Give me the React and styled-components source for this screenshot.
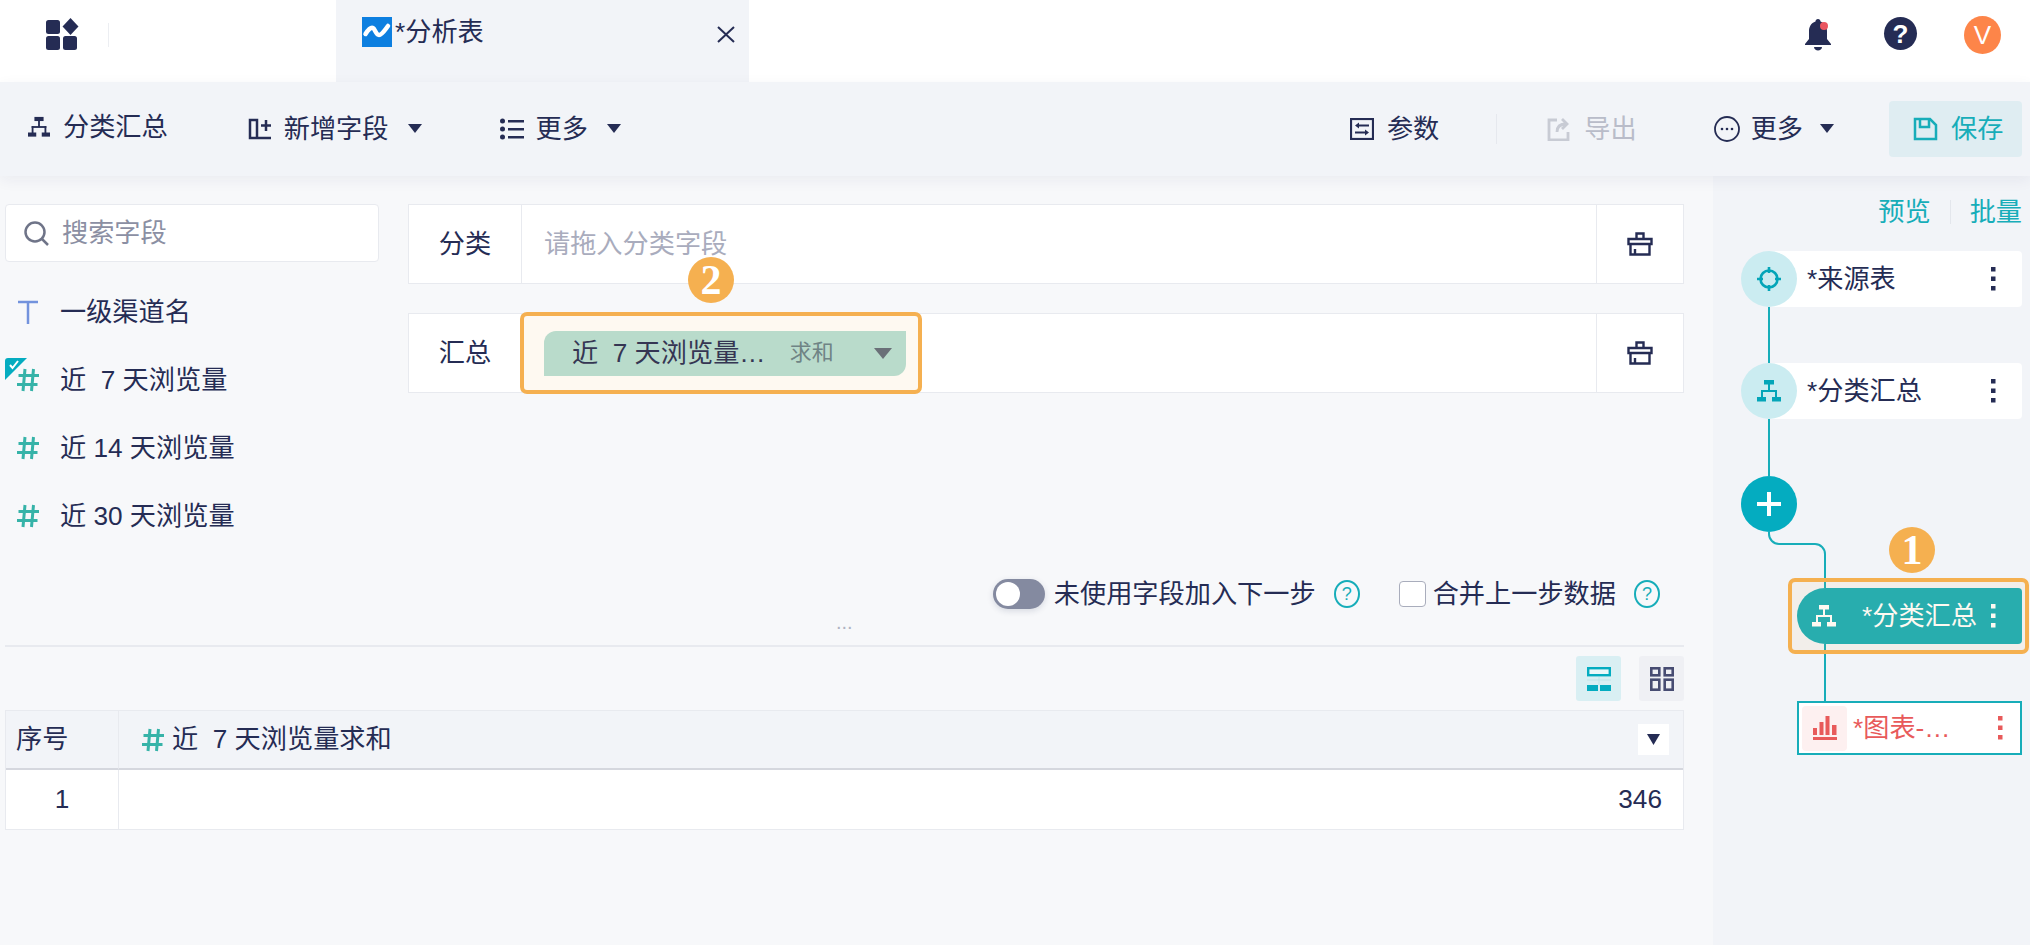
import React from "react";
import styled, { createGlobalStyle } from "styled-components";

const INK = "#252c54";
const TEAL = "#17adb9";
const ORANGE = "#f5b050";
const LINE = "#e8eaef";

const GlobalStyle = createGlobalStyle`
    html, body {
        margin: 0;
        padding: 0;
        background: #f7f8fa;
    }
    * {
        box-sizing: border-box;
    }
    body {
        font-family: "Liberation Sans", "Noto Sans CJK SC", sans-serif;
        font-size: 26.2px;
        line-height: 1;
        color: ${INK};
    }
`;

const Page = styled.div`
    width: 2030px;
    height: 945px;
    overflow: hidden;
    display: flex;
    flex-direction: column;
`;

/* top tab bar */
const TopBar = styled.div`
    height: 82px;
    flex: none;
    background: white;
    display: flex;
`;

const Brand = styled.div`
    width: 336px;
    display: flex;
    align-items: flex-start;
    padding: 18px 0 0 46px;
`;

const BrandDivider = styled.div`
    width: 1px;
    height: 24px;
    margin: 5px 0 0 29px;
    background: #eceef2;
`;

const Tab = styled.div`
    width: 413px;
    background: #f2f4f8;
    display: flex;
    align-items: flex-start;
    padding: 17px 14px 0 26px;
    line-height: 30px;
`;

const TabTitle = styled.span`
    margin-left: 3px;
    flex: 1;
`;

const TabClose = styled.span`
    margin-top: 9px;
    display: flex;
`;

const TopRight = styled.div`
    margin-left: auto;
    padding: 16px 29px 0 0;
    display: flex;
    align-items: flex-start;
`;

const BellWrap = styled.span`
    display: flex;
    margin: 2px 0 0 0;
`;

const HelpDark = styled.span`
    width: 33px;
    height: 33px;
    margin: 1px 0 0 52px;
    border-radius: 50%;
    background: ${INK};
    color: white;
    font-size: 26px;
    font-weight: 700;
    display: flex;
    align-items: center;
    justify-content: center;
`;

const Avatar = styled.span`
    width: 37px;
    height: 38px;
    margin-left: 47px;
    border-radius: 50%;
    background: #fd8549;
    color: white;
    font-size: 26px;
    display: flex;
    align-items: center;
    justify-content: center;
`;

/* toolbar */
const Toolbar = styled.div`
    height: 94px;
    flex: none;
    background: #f2f4f8;
    box-shadow: 0 4px 14px rgba(30, 40, 80, .06);
    position: relative;
    z-index: 2;
    display: flex;
    align-items: center;
    justify-content: space-between;
    padding: 0 8px 0 28px;
`;

const ToolGroup = styled.div`
    display: flex;
    align-items: center;
`;

const ToolItem = styled.div`
    display: flex;
    align-items: center;
    margin-left: ${p => p.$ml || 0}px;
    margin-top: ${p => p.$mt || 0}px;
    color: ${p => p.$disabled ? "#b9bcc9" : INK};
    white-space: nowrap;
`;

const ToolLabel = styled.span`
    margin-left: ${p => p.$ml || 13}px;
`;

const Caret = styled.span`
    width: 0;
    height: 0;
    margin-left: ${p => p.$ml || 17}px;
    border-left: ${p => p.$size || 7}px solid transparent;
    border-right: ${p => p.$size || 7}px solid transparent;
    border-top: ${p => (p.$size || 7) + 2}px solid ${p => p.$color || INK};
`;

const ToolDivider = styled.div`
    width: 1px;
    height: 30px;
    margin-left: 57px;
    background: #e6e8ee;
`;

const SaveButton = styled.div`
    width: 133px;
    height: 56px;
    margin-left: 55px;
    padding-left: 24px;
    border-radius: 4px;
    background: #dfedf2;
    color: ${TEAL};
    display: flex;
    align-items: center;
`;

/* body */
const Body = styled.div`
    flex: 1;
    display: flex;
    min-height: 0;
`;

const Main = styled.div`
    width: 1713px;
    background: #f7f8fa;
    display: flex;
    flex-direction: column;
`;

const Designer = styled.div`
    height: 469px;
    flex: none;
    display: grid;
    grid-template-columns: 408px 1276px;
    padding-top: 28px;
`;

const FieldColumn = styled.div`
    padding: 0 29px 0 5px;
`;

const SearchBox = styled.div`
    height: 58px;
    border: 1px solid ${LINE};
    border-radius: 4px;
    background: white;
    color: #8b8fa3;
    display: flex;
    align-items: center;
    padding-left: 18px;
`;

const SearchText = styled.span`
    margin-left: 13px;
`;

const FieldList = styled.div`
    margin-top: 16px;
`;

const FieldRow = styled.div`
    height: 68px;
    position: relative;
    display: flex;
    align-items: center;
    padding-left: 12px;
    white-space: pre;
`;

const FieldIcon = styled.span`
    width: 22px;
    margin-right: 21px;
    display: flex;
    justify-content: center;
`;

const CheckMark = styled.span`
    position: absolute;
    left: 0;
    top: 12px;
    display: flex;
`;

const ConfigColumn = styled.div`
    display: flex;
    flex-direction: column;
`;

const ConfigRow = styled.div`
    height: 80px;
    margin-top: ${p => p.$mt || 0}px;
    background: white;
    border: 1px solid ${LINE};
    display: grid;
    grid-template-columns: 113px 1fr 87px;
`;

const ConfigLabel = styled.div`
    display: flex;
    align-items: center;
    justify-content: center;
    border-right: 1px solid ${LINE};
`;

const DropSlot = styled.div`
    position: relative;
    display: flex;
    align-items: center;
    padding-left: 22px;
    color: #a9acbd;
`;

const BrushCell = styled.div`
    display: flex;
    align-items: center;
    justify-content: center;
    border-left: 1px solid ${LINE};
`;

const FieldPill = styled.div`
    width: 362px;
    height: 45px;
    padding: 0 14px 0 28px;
    background: #b5dfd6;
    border-radius: 12px 0 12px 0;
    color: ${INK};
    display: flex;
    align-items: center;
    white-space: pre;
`;

const PillName = styled.span`
    width: 230px;
`;

const PillAgg = styled.span`
    width: 71px;
    font-size: 22px;
    color: #64808a;
`;

const Highlight = styled.div`
    position: absolute;
    border: 4px solid ${ORANGE};
    border-radius: 7px;
    background: rgba(245, 176, 80, .08);
    pointer-events: none;
    top: ${p => p.$top}px;
    left: ${p => p.$left}px;
    right: ${p => p.$right}px;
    bottom: ${p => p.$bottom}px;
`;

const StepBadge = styled.div`
    position: absolute;
    top: ${p => p.$top}px;
    left: ${p => p.$left}px;
    width: 46px;
    height: 46px;
    border-radius: 50%;
    background: ${ORANGE};
    color: white;
    font-family: "Liberation Serif", serif;
    font-size: 42px;
    font-weight: 700;
    line-height: 46px;
    text-align: center;
    z-index: 3;
`;

const OptionRow = styled.div`
    margin-top: 186px;
    padding-right: 24px;
    display: flex;
    justify-content: flex-end;
    align-items: center;
`;

const Toggle = styled.span`
    width: 52px;
    height: 30px;
    padding: 3px;
    border-radius: 15px;
    background: #848aa0;
    box-shadow: 0 2px 6px rgba(30, 40, 80, .15);
    display: flex;
`;

const ToggleKnob = styled.span`
    width: 24px;
    height: 24px;
    border-radius: 50%;
    background: white;
`;

const OptionText = styled.span`
    margin-left: ${p => p.$ml}px;
`;

const HelpLight = styled.span`
    width: 26px;
    height: 28px;
    margin-left: 18px;
    border: 2px solid ${TEAL};
    border-radius: 50%;
    color: ${TEAL};
    font-size: 18px;
    display: flex;
    align-items: center;
    justify-content: center;
`;

const CheckBox = styled.span`
    width: 27px;
    height: 26px;
    margin-left: 39px;
    border: 1px solid #a9adbc;
    border-radius: 4px;
    background: white;
`;

const Splitter = styled.div`
    height: 2px;
    flex: none;
    width: 1679px;
    margin-left: 5px;
    position: relative;
    background: ${LINE};
`;

const SplitterHandle = styled.span`
    position: absolute;
    left: 831px;
    top: -33px;
    font-size: 20px;
    color: #b0b3c2;
`;

const Preview = styled.div`
    width: 1679px;
    margin-left: 5px;
`;

const ViewButtons = styled.div`
    margin-top: 9px;
    display: flex;
    justify-content: flex-end;
    gap: 18px;
`;

const ViewButton = styled.div`
    width: 45px;
    height: 45px;
    border-radius: 3px;
    background: ${p => p.$active ? "#d9eff3" : "#eff0f4"};
    display: flex;
    align-items: center;
    justify-content: center;
`;

const Table = styled.div`
    margin-top: 9px;
    border: 1px solid ${LINE};
    display: grid;
    grid-template-columns: 113px 1fr;
    grid-template-rows: 59px 59px;
    background: white;
`;

const HeadCell = styled.div`
    background: #f2f4f8;
    border-bottom: 2px solid #d5d7de;
    border-right: ${p => p.$first ? `1px solid ${LINE}` : "0"};
    display: flex;
    align-items: center;
    padding-left: ${p => p.$pl}px;
    padding-right: 14px;
    white-space: pre;
`;

const HeadIcon = styled.span`
    display: flex;
    margin-right: 8px;
`;

const HeadText = styled.span`
    flex: 1;
`;

const SortBox = styled.span`
    width: 31px;
    height: 31px;
    background: white;
    display: flex;
    align-items: center;
    justify-content: center;
`;

const BodyCell = styled.div`
    display: flex;
    align-items: center;
    justify-content: ${p => p.$right ? "flex-end" : "center"};
    padding-right: ${p => p.$right ? 21 : 0}px;
    border-right: ${p => p.$right ? "0" : `1px solid ${LINE}`};
`;

/* flow sidebar */
const Sidebar = styled.div`
    width: 317px;
    background: #f2f4f8;
    padding-top: 20px;
`;

const SideLinks = styled.div`
    height: 32px;
    padding-right: 8px;
    color: ${TEAL};
    display: flex;
    justify-content: flex-end;
    align-items: center;
`;

const SideSep = styled.span`
    width: 1px;
    height: 24px;
    margin: 0 19px;
    background: #e3e6ec;
`;

const Flow = styled.div`
    margin-top: 23px;
    padding-left: 28px;
    display: flex;
    flex-direction: column;
`;

const FlowNode = styled.div`
    width: 281px;
    height: 56px;
    background: linear-gradient(to right, transparent 28px, white 28px);
    border-radius: 0 4px 4px 0;
    display: flex;
    align-items: center;
`;

const NodeCircle = styled.span`
    width: 56px;
    height: 56px;
    flex: none;
    border-radius: 50%;
    background: #cbecf1;
    display: flex;
    align-items: center;
    justify-content: center;
`;

const NodeTitle = styled.span`
    flex: 1;
    margin-left: 10px;
`;

const NodeDots = styled.span`
    width: ${p => p.$w || 31}px;
    flex: none;
    display: flex;
`;

const Connector = styled.div`
    width: 2px;
    height: ${p => p.$h}px;
    margin-left: ${p => p.$ml || 27}px;
    background: ${TEAL};
`;

const PlusCircle = styled.div`
    width: 56px;
    height: 56px;
    border-radius: 50%;
    background: #04acc0;
    display: flex;
    align-items: center;
    justify-content: center;
`;

const CurveLink = styled.svg`
    display: block;
    margin-left: 27px;
`;

const ActiveNode = styled.div`
    width: 225px;
    height: 56px;
    margin-left: 56px;
    position: relative;
    background: #17adb7;
    border-radius: 28px 4px 4px 28px;
    color: white;
    display: flex;
    align-items: center;
    padding-left: 15px;
`;

const ActiveTitle = styled.span`
    flex: 1;
    margin-left: 26px;
    white-space: nowrap;
`;

const ChartNode = styled.div`
    width: 225px;
    height: 54px;
    margin-left: 56px;
    background: white;
    border: 2px solid ${TEAL};
    color: #e85a5a;
    display: flex;
    align-items: center;
    padding-left: 3px;
`;

const ChartIcon = styled.span`
    width: 45px;
    height: 45px;
    border-radius: 4px;
    background: #fdf0f0;
    display: flex;
    align-items: center;
    justify-content: center;
`;

const ChartTitle = styled.span`
    flex: 1;
    margin-left: 6px;
    white-space: nowrap;
`;

const AppsIcon = () => (
    <svg width="33" height="32" viewBox="0 0 33 32" fill={INK}>
        <rect x="0" y="2" width="14" height="14" rx="2.5"/>
        <path d="M24.5 0l8 8.5-8 8.5-8-8.5z"/>
        <rect x="0" y="18" width="14" height="14" rx="2.5"/>
        <rect x="17" y="18" width="14" height="14" rx="2.5"/>
    </svg>
);

const TabIcon = () => (
    <svg width="30" height="30" viewBox="0 0 30 30">
        <rect width="30" height="30" fill="#0d7fe0"/>
        <path d="M3.500 17C6 13 9 10 11 11c2 1 3 7 6 7s6-5 9-9" fill="none" stroke="white" strokeWidth="4.500" strokeLinecap="round" strokeLinejoin="round"/>
    </svg>
);

const CloseIcon = () => (
    <svg width="18" height="17" viewBox="0 0 18 17" stroke={INK} strokeWidth="2">
        <path d="M1 1l16 15M17 1L1 16"/>
    </svg>
);

const BellIcon = () => (
    <svg width="28" height="33" viewBox="0 0 28 33" fill={INK}>
        <path d="M14 1c1.500 0 2.500 1 2.500 2.500C21 5 23 9 23 13v8l4 5v1H1v-1l4-5v-8c0-4 2-8 6.500-9.500C11.500 2 12.500 1 14 1z"/>
        <path d="M10 29h8c0 2-2 3.500-4 3.500S10 31 10 29z"/>
        <circle cx="20" cy="8" r="4" fill="#ea5560"/>
    </svg>
);

const HierarchyIcon = ({color = INK, size = 24}) => (
    <svg width={size} height={size} viewBox="0 0 24 24" fill={color}>
        <rect x="7" y="1" width="10" height="4.500"/>
        <rect x="11" y="5" width="2" height="7"/>
        <rect x="4" y="11" width="16" height="2"/>
        <rect x="4" y="11" width="2" height="8"/>
        <rect x="18" y="11" width="2" height="8"/>
        <rect x="0" y="18" width="9" height="4.500"/>
        <rect x="15" y="18" width="9" height="4.500"/>
    </svg>
);

const AddFieldIcon = () => (
    <svg width="24" height="22" viewBox="0 0 24 22" fill="none" stroke={INK} strokeWidth="2.500">
        <path d="M2 2h7v18H2zM9 20h14M18 2v11M13 7.500h10"/>
    </svg>
);

const ListIcon = () => (
    <svg width="24" height="22" viewBox="0 0 24 22" fill={INK}>
        <circle cx="2.500" cy="3" r="2.500"/>
        <circle cx="2.500" cy="11" r="2.500"/>
        <circle cx="2.500" cy="19" r="2.500"/>
        <rect x="8" y="2" width="16" height="2.500"/>
        <rect x="8" y="10" width="16" height="2.500"/>
        <rect x="8" y="18" width="16" height="2.500"/>
    </svg>
);

const ParamsIcon = () => (
    <svg width="24" height="22" viewBox="0 0 24 22" fill="none" stroke={INK} strokeWidth="2.200">
        <rect x="1" y="1" width="22" height="20"/>
        <path d="M9 7.500h10M5 14.500h10"/>
        <path d="M9 4.500L5 7.500l4 3zM15 11.500l4 3-4 3z" fill={INK} stroke="none"/>
    </svg>
);

const ExportIcon = () => (
    <svg width="24" height="24" viewBox="0 0 24 24" fill="none" stroke="#c8cbd4" strokeWidth="2.800">
        <path d="M10 3H2v20h19v-8"/>
        <path d="M10 15c0-5 3-8 9-8M15 2l5 5-5 5"/>
    </svg>
);

const MoreCircleIcon = () => (
    <svg width="26" height="26" viewBox="0 0 26 26" fill={INK}>
        <circle cx="13" cy="13" r="12" fill="none" stroke={INK} strokeWidth="1.800"/>
        <circle cx="8" cy="13" r="1.300"/>
        <circle cx="13" cy="13" r="1.300"/>
        <circle cx="18" cy="13" r="1.300"/>
    </svg>
);

const SaveIcon = () => (
    <svg width="25" height="24" viewBox="0 0 25 24" fill="none" stroke={TEAL} strokeWidth="2.500">
        <path d="M2 2h15l6 6v14H2z"/>
        <path d="M7 2v8h9V2"/>
    </svg>
);

const SearchIcon = () => (
    <svg width="25" height="25" viewBox="0 0 25 25" fill="none" stroke="#6f7488" strokeWidth="2.500">
        <circle cx="11" cy="11" r="9.500"/>
        <path d="M18 18l6 6"/>
    </svg>
);

const TextTypeIcon = () => (
    <svg width="20" height="24" viewBox="0 0 20 24" fill="none" stroke="#7393dd" strokeWidth="2.500">
        <path d="M0 2h20M10 2v22"/>
    </svg>
);

const NumberTypeIcon = () => (
    <svg width="22" height="24" viewBox="0 0 22 24" fill="none" stroke="#36b3a8" strokeWidth="3">
        <path d="M8 1L6 23M16.500 1l-2 22M1.500 7.500H22M0 16.500h20.500"/>
    </svg>
);

const SelectedMark = () => (
    <svg width="23" height="23" viewBox="0 0 23 23">
        <path d="M0 3a3 3 0 0 1 3-3h19L0 22z" fill="#04acc0"/>
        <path d="M5 7l2.500 3L13 3" fill="none" stroke="white" strokeWidth="2"/>
    </svg>
);

const BrushIcon = () => (
    <svg width="26" height="24" viewBox="0 0 26 24" fill="none" stroke={INK} strokeWidth="2.400">
        <path d="M9.500 7V1.500h7V7"/>
        <path d="M1.500 7h23v5h-23z"/>
        <path d="M3.500 12v10.500h19V12M8 22v-5"/>
    </svg>
);

const CaretSmall = () => (
    <svg width="13" height="13" viewBox="0 0 13 13" fill={INK}>
        <path d="M0 1h13L6.500 12z"/>
    </svg>
);

const RowLayoutIcon = () => (
    <svg width="24" height="24" viewBox="0 0 24 24">
        <rect x="1.200" y="1.200" width="21.600" height="7" fill="#eaf7f9" stroke="#04acc0" strokeWidth="2.400"/>
        <path d="M0 13h24M12 10v8" stroke="#bfe5ea" strokeWidth="1" fill="none"/>
        <rect x="0" y="18" width="11" height="6" fill="#04acc0"/>
        <rect x="13" y="18" width="11" height="6" fill="#04acc0"/>
    </svg>
);

const GridLayoutIcon = () => (
    <svg width="24" height="24" viewBox="0 0 24 24" fill="none" stroke="#474c72" strokeWidth="2.600">
        <rect x="1.300" y="1.300" width="8" height="7"/>
        <rect x="14.700" y="1.300" width="8" height="7"/>
        <rect x="1.300" y="12.700" width="8" height="10"/>
        <rect x="14.700" y="12.700" width="8" height="10"/>
    </svg>
);

const TargetIcon = () => (
    <svg width="24" height="24" viewBox="0 0 24 24" fill="none" stroke="#04a5b8" strokeWidth="2.600">
        <circle cx="12" cy="12" r="8.500"/>
        <path d="M12 0v6M12 18v6M0 12h6M18 12h6"/>
    </svg>
);

const Dots = ({color = INK}) => (
    <svg width="5" height="24" viewBox="0 0 5 24" fill={color}>
        <rect width="4.500" height="4.500"/>
        <rect y="9.500" width="4.500" height="4.500"/>
        <rect y="19" width="4.500" height="4.500"/>
    </svg>
);

const PlusIcon = () => (
    <svg width="24" height="24" viewBox="0 0 24 24" fill="white">
        <rect y="10" width="24" height="4"/>
        <rect x="10" width="4" height="24"/>
    </svg>
);

const BarChartIcon = () => (
    <svg width="24" height="24" viewBox="0 0 24 24" fill="#e85a5a">
        <rect x="0" y="12" width="4" height="7"/>
        <rect x="6.500" y="6" width="4" height="13"/>
        <rect x="12.500" y="0" width="4" height="19"/>
        <rect x="19" y="9" width="4.500" height="10"/>
        <rect x="0" y="21" width="24" height="3"/>
    </svg>
);

const fields = [
    {name: "近  7 天浏览量", checked: true},
    {name: "近 14 天浏览量"},
    {name: "近 30 天浏览量"},
];

export default function App() {
    return (
        <Page>
            <GlobalStyle/>
            <TopBar>
                <Brand>
                    <AppsIcon/>
                    <BrandDivider/>
                </Brand>
                <Tab>
                    <TabIcon/>
                    <TabTitle>*分析表</TabTitle>
                    <TabClose><CloseIcon/></TabClose>
                </Tab>
                <TopRight>
                    <BellWrap><BellIcon/></BellWrap>
                    <HelpDark>?</HelpDark>
                    <Avatar>V</Avatar>
                </TopRight>
            </TopBar>

            <Toolbar>
                <ToolGroup>
                    <ToolItem $mt={-3}>
                        <HierarchyIcon size={22}/>
                        <ToolLabel>分类汇总</ToolLabel>
                    </ToolItem>
                    <ToolItem $ml={80}>
                        <AddFieldIcon/>
                        <ToolLabel $ml={12}>新增字段</ToolLabel>
                        <Caret $ml={19}/>
                    </ToolItem>
                    <ToolItem $ml={78}>
                        <ListIcon/>
                        <ToolLabel $ml={12}>更多</ToolLabel>
                        <Caret $ml={19}/>
                    </ToolItem>
                </ToolGroup>
                <ToolGroup>
                    <ToolItem>
                        <ParamsIcon/>
                        <ToolLabel>参数</ToolLabel>
                    </ToolItem>
                    <ToolDivider/>
                    <ToolItem $ml={50} $disabled>
                        <ExportIcon/>
                        <ToolLabel>导出</ToolLabel>
                    </ToolItem>
                    <ToolItem $ml={77}>
                        <MoreCircleIcon/>
                        <ToolLabel $ml={11}>更多</ToolLabel>
                        <Caret/>
                    </ToolItem>
                    <SaveButton>
                        <SaveIcon/>
                        <ToolLabel>保存</ToolLabel>
                    </SaveButton>
                </ToolGroup>
            </Toolbar>

            <Body>
                <Main>
                    <Designer>
                        <FieldColumn>
                            <SearchBox>
                                <SearchIcon/>
                                <SearchText>搜索字段</SearchText>
                            </SearchBox>
                            <FieldList>
                                <FieldRow>
                                    <FieldIcon><TextTypeIcon/></FieldIcon>
                                    一级渠道名
                                </FieldRow>
                                {fields.map((item, index) => (
                                    <FieldRow key={index}>
                                        {item.checked ? <CheckMark><SelectedMark/></CheckMark> : null}
                                        <FieldIcon><NumberTypeIcon/></FieldIcon>
                                        {item.name}
                                    </FieldRow>
                                ))}
                            </FieldList>
                        </FieldColumn>

                        <ConfigColumn>
                            <ConfigRow>
                                <ConfigLabel>分类</ConfigLabel>
                                <DropSlot>请拖入分类字段</DropSlot>
                                <BrushCell><BrushIcon/></BrushCell>
                            </ConfigRow>
                            <ConfigRow $mt={29}>
                                <ConfigLabel>汇总</ConfigLabel>
                                <DropSlot>
                                    <FieldPill>
                                        <PillName>近  7 天浏览量…</PillName>
                                        <PillAgg>求和</PillAgg>
                                        <Caret $ml={0} $size={9} $color="#5f6b7c"/>
                                    </FieldPill>
                                    <Highlight $top={-2} $left={-2} $right={674} $bottom={-2}/>
                                    <StepBadge $top={-57} $left={166}>2</StepBadge>
                                </DropSlot>
                                <BrushCell><BrushIcon/></BrushCell>
                            </ConfigRow>
                            <OptionRow>
                                <Toggle><ToggleKnob/></Toggle>
                                <OptionText $ml={9}>未使用字段加入下一步</OptionText>
                                <HelpLight>?</HelpLight>
                                <CheckBox/>
                                <OptionText $ml={7}>合并上一步数据</OptionText>
                                <HelpLight>?</HelpLight>
                            </OptionRow>
                        </ConfigColumn>
                    </Designer>

                    <Splitter><SplitterHandle>...</SplitterHandle></Splitter>

                    <Preview>
                        <ViewButtons>
                            <ViewButton $active><RowLayoutIcon/></ViewButton>
                            <ViewButton><GridLayoutIcon/></ViewButton>
                        </ViewButtons>
                        <Table>
                            <HeadCell $first $pl={10}>序号</HeadCell>
                            <HeadCell $pl={23}>
                                <HeadIcon><NumberTypeIcon/></HeadIcon>
                                <HeadText>近  7 天浏览量求和</HeadText>
                                <SortBox><CaretSmall/></SortBox>
                            </HeadCell>
                            <BodyCell>1</BodyCell>
                            <BodyCell $right>346</BodyCell>
                        </Table>
                    </Preview>
                </Main>

                <Sidebar>
                    <SideLinks>
                        预览
                        <SideSep/>
                        批量
                    </SideLinks>
                    <Flow>
                        <FlowNode>
                            <NodeCircle><TargetIcon/></NodeCircle>
                            <NodeTitle>*来源表</NodeTitle>
                            <NodeDots><Dots/></NodeDots>
                        </FlowNode>
                        <Connector $h={56}/>
                        <FlowNode>
                            <NodeCircle><HierarchyIcon color="#04a5b8"/></NodeCircle>
                            <NodeTitle>*分类汇总</NodeTitle>
                            <NodeDots><Dots/></NodeDots>
                        </FlowNode>
                        <Connector $h={57}/>
                        <PlusCircle><PlusIcon/></PlusCircle>
                        <CurveLink width="58" height="56" viewBox="0 0 58 56" fill="none" stroke={TEAL} strokeWidth="2">
                            <path d="M1 0v2a10 10 0 0 0 10 10h36a10 10 0 0 1 10 10v34"/>
                        </CurveLink>
                        <ActiveNode>
                            <HierarchyIcon color="white"/>
                            <ActiveTitle>*分类汇总</ActiveTitle>
                            <NodeDots><Dots color="white"/></NodeDots>
                            <Highlight $top={-10} $left={-9} $right={-7} $bottom={-10}/>
                            <StepBadge $top={-61} $left={92}>1</StepBadge>
                        </ActiveNode>
                        <Connector $h={57} $ml={83}/>
                        <ChartNode>
                            <ChartIcon><BarChartIcon/></ChartIcon>
                            <ChartTitle>*图表-…</ChartTitle>
                            <NodeDots $w={22}><Dots color="#e85a5a"/></NodeDots>
                        </ChartNode>
                    </Flow>
                </Sidebar>
            </Body>
        </Page>
    );
}
